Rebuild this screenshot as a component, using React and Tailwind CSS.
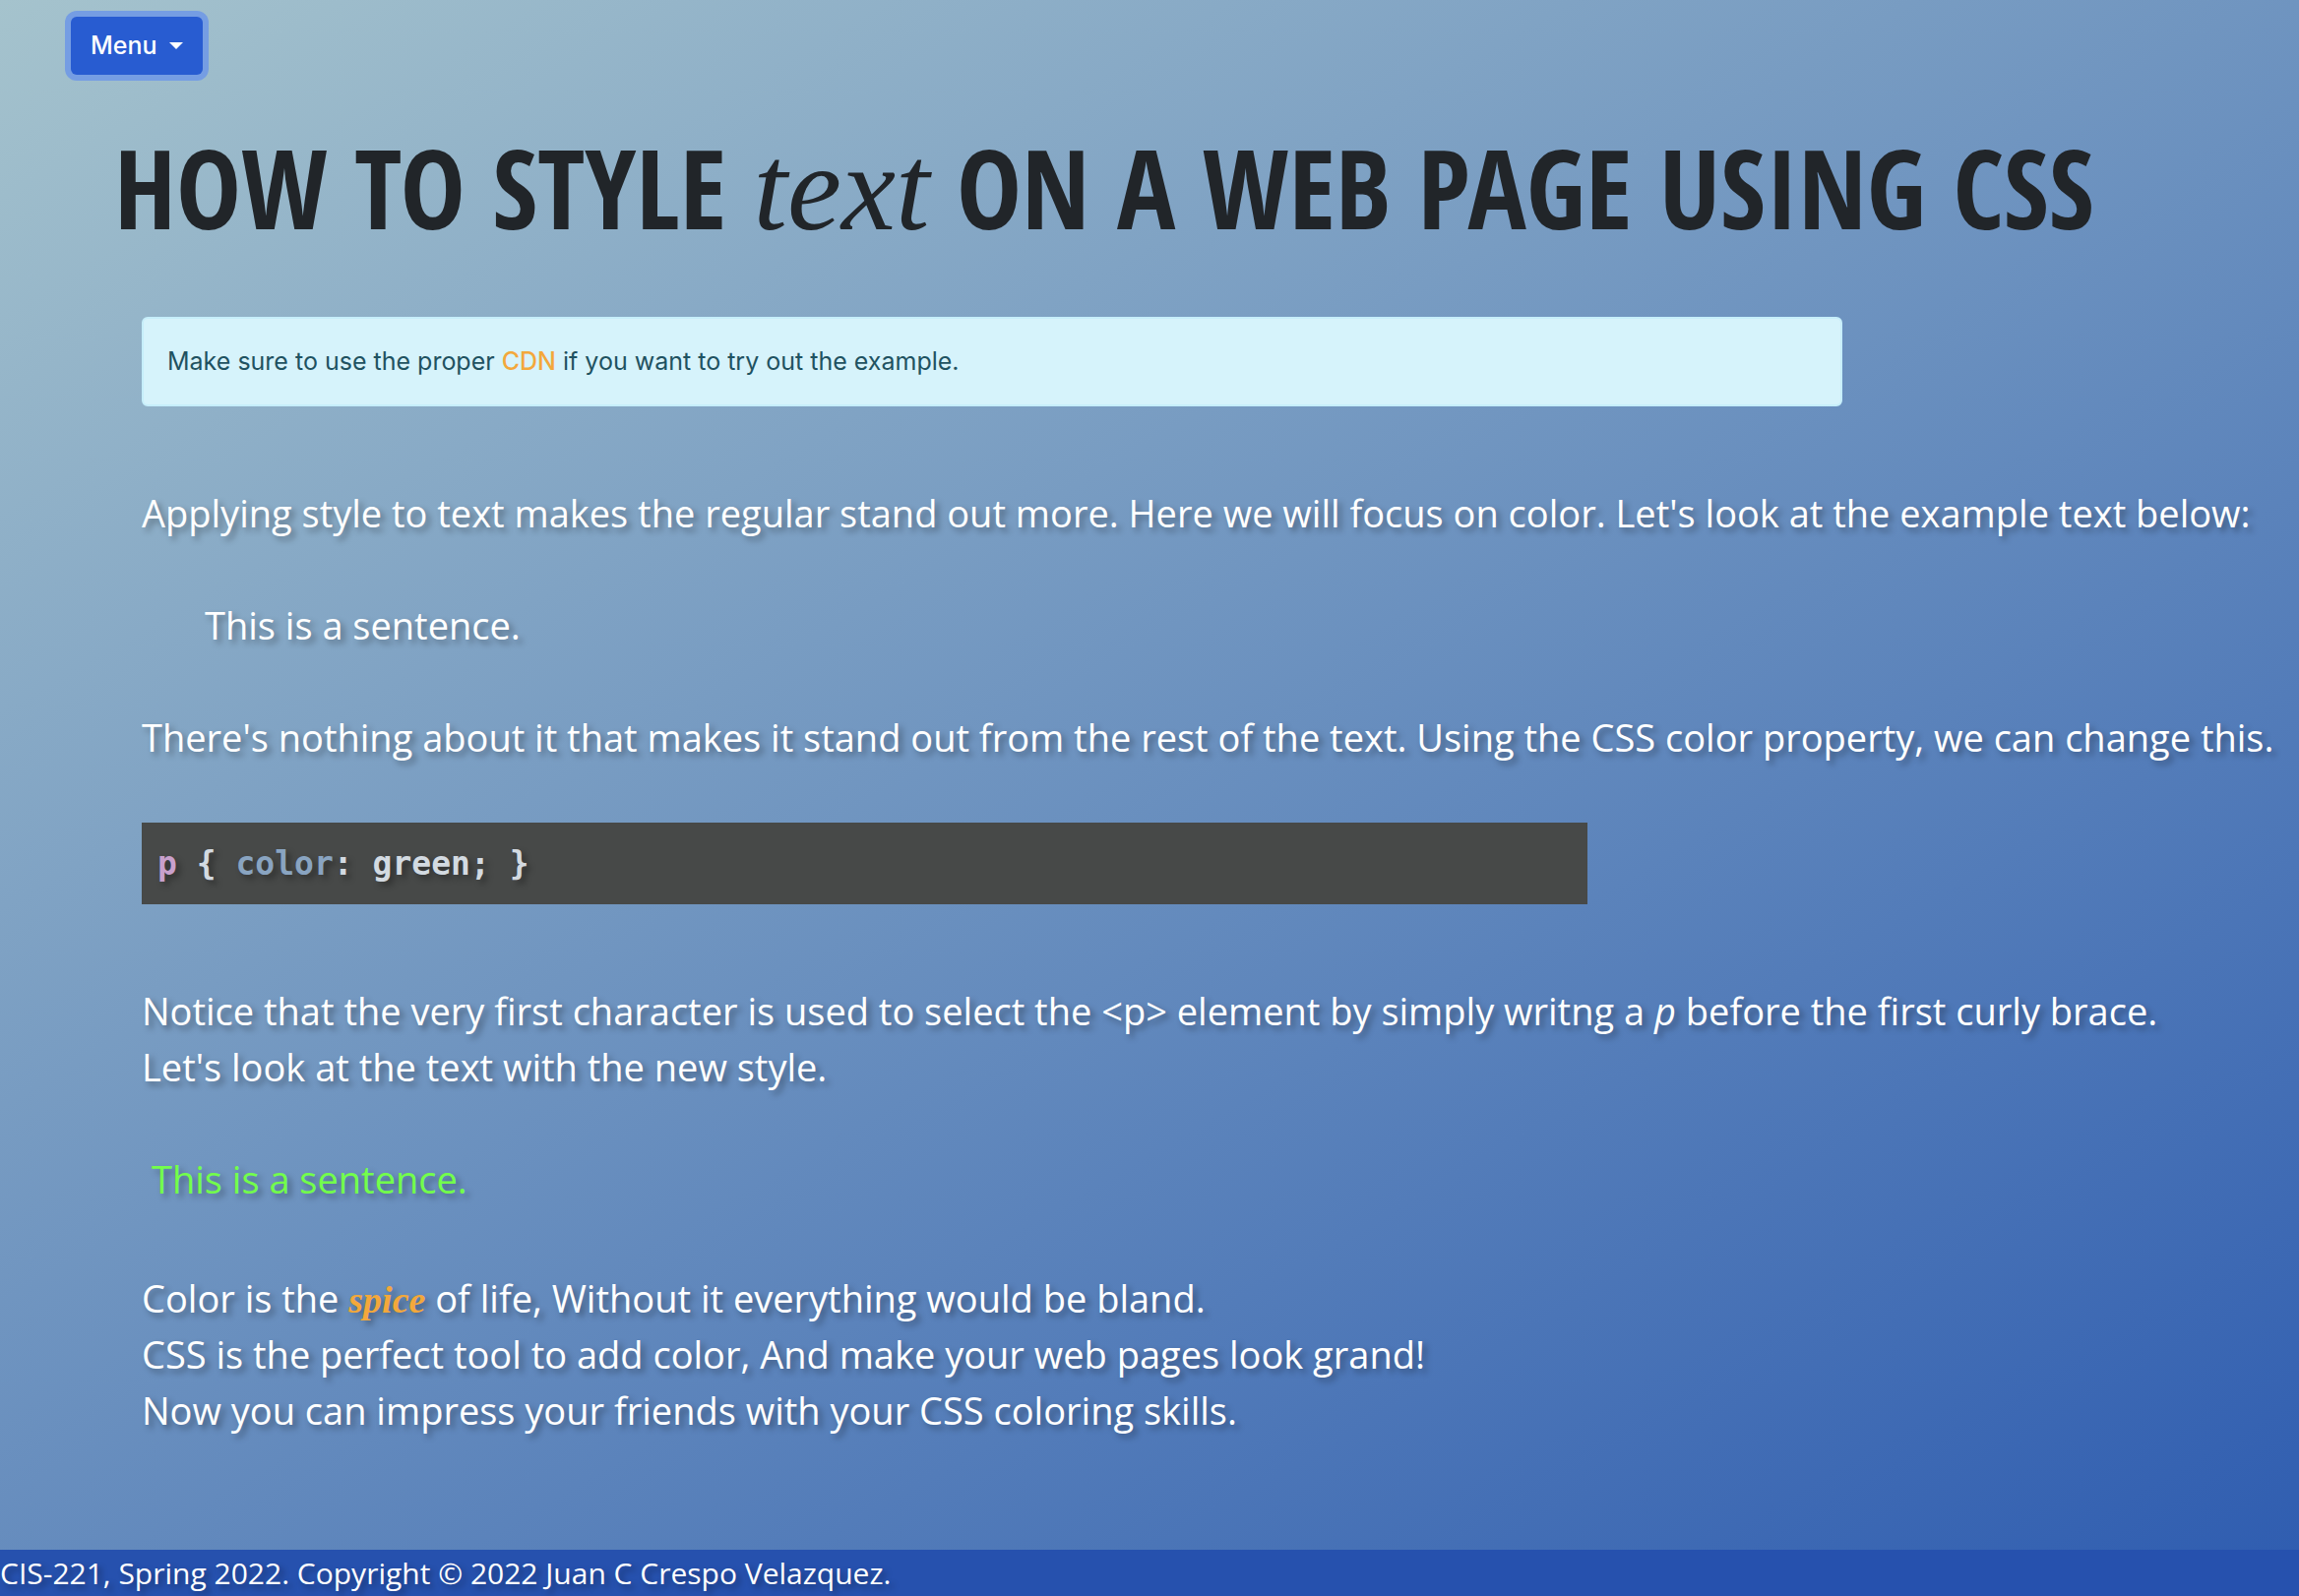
import React from "react";

const proseClass =
  "font-['Open_Sans',sans-serif] text-[38px] leading-[57px] text-white [text-shadow:4px_4px_6px_rgb(0_0_0/0.35)]";

function MenuButton() {
  return (
    <button
      type="button"
      aria-haspopup="true"
      className="flex h-[59px] items-center gap-3 rounded-md bg-[#285cd1] px-5 font-['Inter',sans-serif] text-[25px] font-medium text-white ring-6 ring-[#759de3]"
    >
      Menu
      <svg width="14" height="7" viewBox="0 0 14 7" aria-hidden="true">
        <path d="M0 0H14L7 7Z" fill="currentColor" />
      </svg>
    </button>
  );
}

function Alert() {
  return (
    <div className="mt-[66px] pr-8">
      <div
        role="alert"
        className="flex min-h-[91px] w-4/5 items-center rounded-md border-2 border-[#c6eefa] bg-[#d6f3fb] px-6 font-['Inter',sans-serif] text-[25px] text-[#1f5261] [text-shadow:none]"
      >
        <p>
          Make sure to use the proper{" "}
          <a href="#cdn" className="font-medium text-[#f3a83b]">
            CDN
          </a>{" "}
          if you want to try out the example.
        </p>
      </div>
    </div>
  );
}

function CodeBlock() {
  return (
    <div className="mt-[58px] pr-8">
      <pre className="w-[68%] bg-[#474948] px-4 font-['DejaVu_Sans_Mono',monospace] text-[33px] leading-[83px] font-bold text-[#d3dae1]">
        <code className="font-['DejaVu_Sans_Mono',monospace]">
          <span className="text-[#c8a0cc]">p</span>
          {" { "}
          <span className="text-[#89a4c1]">color</span>
          {": green; }"}
        </code>
      </pre>
    </div>
  );
}

export default function App() {
  return (
    <div className="flex min-h-screen flex-col bg-[linear-gradient(150deg,#a5c3cd,#2e5cb0)]">
      <header className="flex pt-[17px] pl-18">
        <MenuButton />
      </header>

      <h1 className="mt-12 pl-[116px] font-['Open_Sans_Condensed','Roboto_Condensed',sans-serif] text-[111px] leading-[132px] font-bold text-[#212529]">
        HOW TO STYLE{" "}
        <span className="font-['Liberation_Serif',serif] text-[124px] leading-none font-normal italic">
          text
        </span>{" "}
        ON A WEB PAGE USING CSS
      </h1>

      <main className={`${proseClass} pl-36`}>
        <Alert />
        <p className="mt-20">
          Applying style to text makes the regular stand out more. Here we will
          focus on color. Let's look at the example text below:
        </p>
        <p className="mt-[57px] pl-16">This is a sentence.</p>
        <p className="mt-[57px]">
          There's nothing about it that makes it stand out from the rest of the
          text. Using the CSS color property, we can change this.
        </p>
        <CodeBlock />
        <p className="mt-20">
          Notice that the very first character is used to select the &lt;p&gt;
          element by simply writng a <em>p</em> before the first curly brace.
          <br />
          Let's look at the text with the new style.
        </p>
        <p className="mt-[57px] pl-2.5 text-[#73ff4b]">This is a sentence.</p>
        <p className="mt-16 pb-16">
          Color is the{" "}
          <em className="font-['Liberation_Serif',serif] leading-none font-bold text-[#f3a83b]">
            spice
          </em>{" "}
          of life, Without it everything would be bland.
          <br />
          CSS is the perfect tool to add color, And make your web pages look
          grand!
          <br />
          Now you can impress your friends with your CSS coloring skills.
        </p>
      </main>

      <footer className="mt-auto bg-[#2651ae] font-['Open_Sans',sans-serif] text-[30px] leading-[47px] text-white [text-shadow:4px_4px_6px_rgb(0_0_0/0.35)]">
        CIS-221, Spring 2022. Copyright © 2022 Juan C Crespo Velazquez.
      </footer>
    </div>
  );
}
